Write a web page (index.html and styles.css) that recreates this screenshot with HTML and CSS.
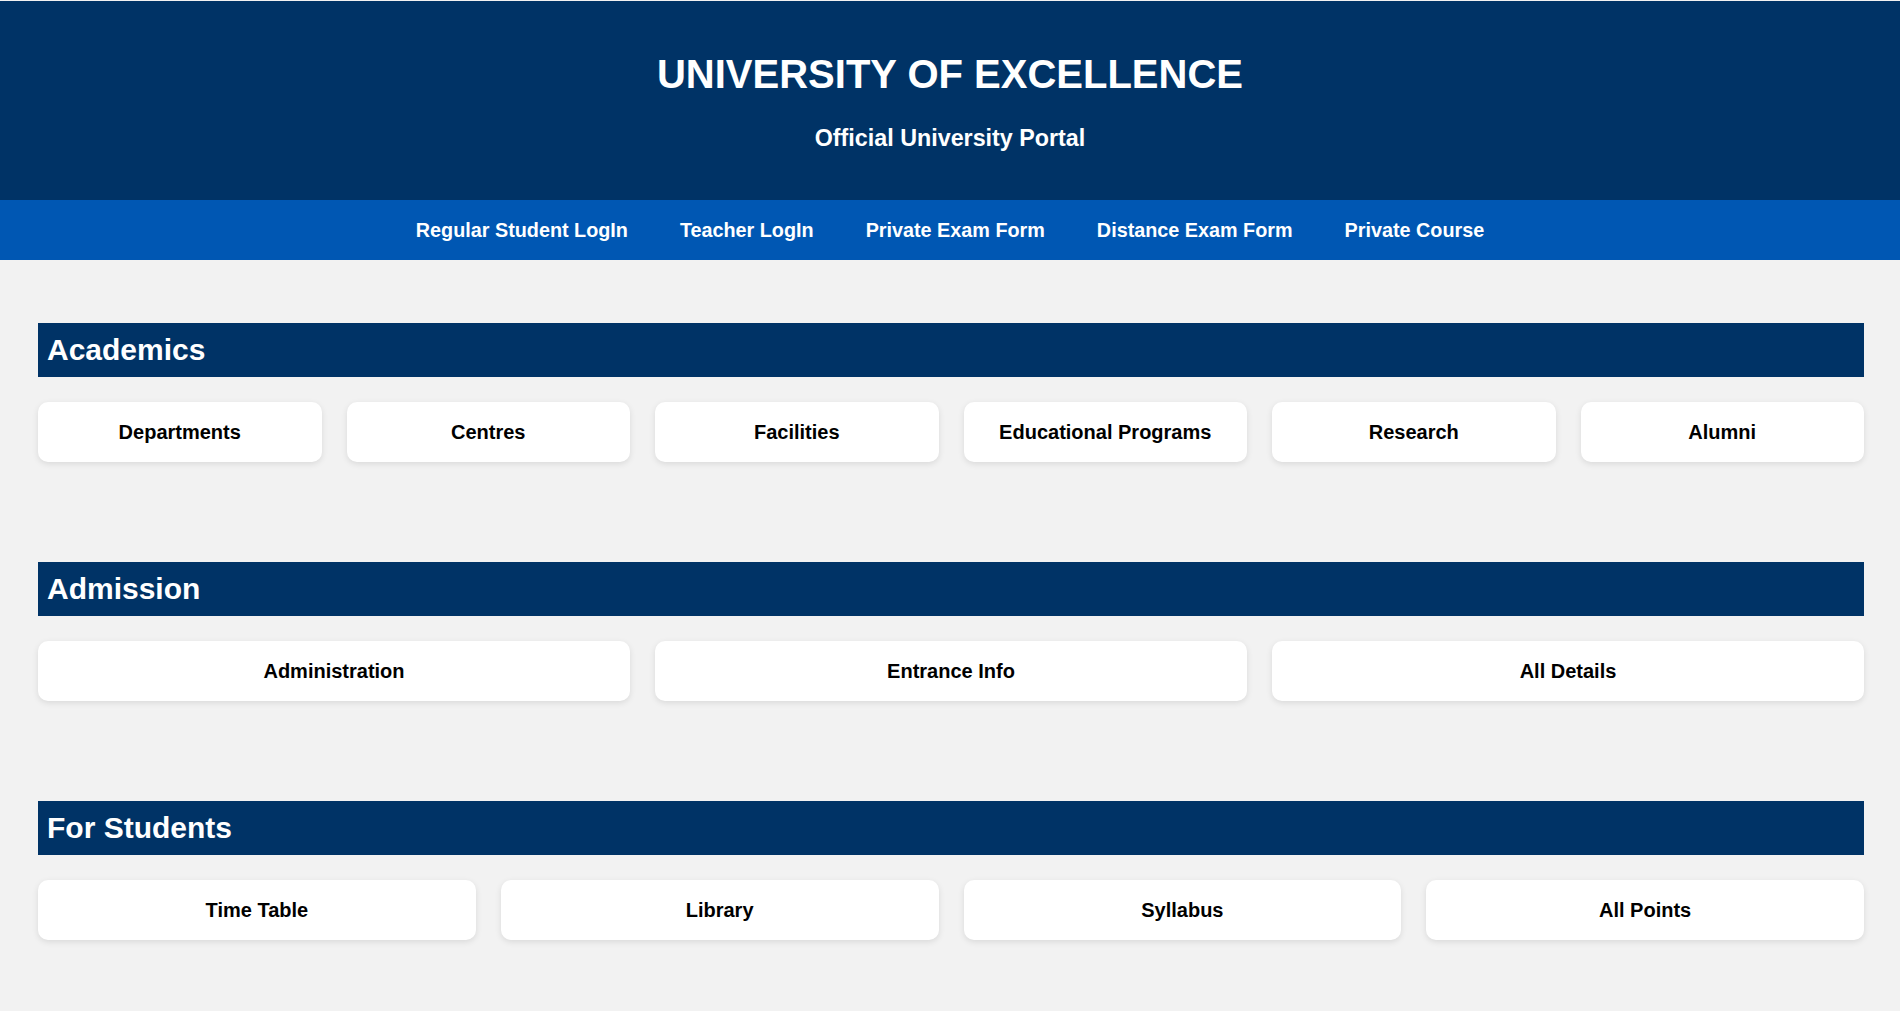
FILE: index.html
```html
<!DOCTYPE html>
<html lang="en">
<head>
<meta charset="utf-8">
<title>University of Excellence</title>
<link rel="stylesheet" href="styles.css">
</head>
<body>
<header class="site-header">
  <h1 class="site-title">UNIVERSITY OF EXCELLENCE</h1>
  <p class="site-subtitle">Official University Portal</p>
</header>
<nav class="top-nav">
  <a href="#">Regular Student LogIn</a>
  <a href="#">Teacher LogIn</a>
  <a href="#">Private Exam Form</a>
  <a href="#">Distance Exam Form</a>
  <a href="#">Private Course</a>
</nav>
<main class="content">
  <section class="section">
    <h2 class="section-title">Academics</h2>
    <div class="card-grid cols-6">
      <a class="card" href="#">Departments</a>
      <a class="card" href="#">Centres</a>
      <a class="card" href="#">Facilities</a>
      <a class="card" href="#">Educational Programs</a>
      <a class="card" href="#">Research</a>
      <a class="card" href="#">Alumni</a>
    </div>
  </section>
  <section class="section">
    <h2 class="section-title">Admission</h2>
    <div class="card-grid cols-3">
      <a class="card" href="#">Administration</a>
      <a class="card" href="#">Entrance Info</a>
      <a class="card" href="#">All Details</a>
    </div>
  </section>
  <section class="section">
    <h2 class="section-title">For Students</h2>
    <div class="card-grid cols-4">
      <a class="card" href="#">Time Table</a>
      <a class="card" href="#">Library</a>
      <a class="card" href="#">Syllabus</a>
      <a class="card" href="#">All Points</a>
    </div>
  </section>
</main>
</body>
</html>
```
FILE: styles.css
```css
* { box-sizing: border-box; }

html, body {
  margin: 0;
  background: #f2f2f2;
  font-family: "Liberation Sans", Arial, sans-serif;
}

body { padding-top: 1px; }

.site-header {
  background: #003366;
  color: #fff;
  text-align: center;
  padding: 50px 20px 48px;
}

.site-title {
  margin: 0;
  font-size: 40px;
  line-height: 46px;
  font-weight: bold;
}

.site-subtitle {
  margin: 27px 0 0;
  font-size: 23.3px;
  line-height: 28px;
  font-weight: bold;
}

.top-nav {
  background: #0057b3;
  display: flex;
  justify-content: center;
  gap: 52px;
  padding: 18px 0;
}

.top-nav a {
  color: #fff;
  text-decoration: none;
  font-weight: bold;
  font-size: 19.8px;
  line-height: 24px;
}

.content {
  padding: 63px 36px 40px 38px;
  display: flex;
  flex-direction: column;
  gap: 100px;
}

.section-title {
  margin: 0 0 25px;
  background: #003366;
  color: #fff;
  font-size: 30px;
  line-height: 34px;
  padding: 10px 9px;
  font-weight: bold;
}

.card-grid {
  display: grid;
  gap: 25px;
}

.cols-6 { grid-template-columns: repeat(6, 1fr); }
.cols-3 { grid-template-columns: repeat(3, 1fr); }
.cols-4 { grid-template-columns: repeat(4, 1fr); }

.card {
  display: block;
  background: #fff;
  color: #000;
  text-decoration: none;
  text-align: center;
  font-weight: bold;
  font-size: 20px;
  line-height: 24px;
  padding: 18px 10px;
  border-radius: 10px;
  box-shadow: 0 2px 6px rgba(0, 0, 0, 0.1);
}
```
